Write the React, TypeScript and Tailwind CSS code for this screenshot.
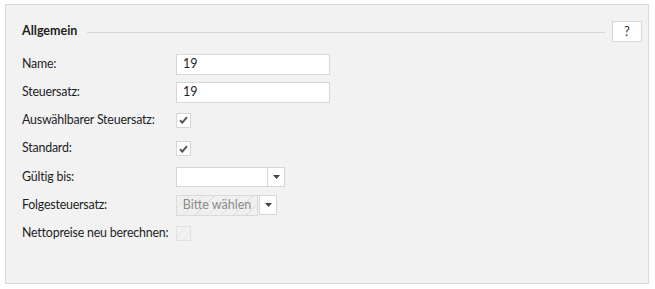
import React from 'react';

const font = { fontFamily: 'Lato, "Open Sans", Arial, sans-serif' };

const Caret = () => (
  <svg width="7" height="4" viewBox="0 0 7 4" className="block">
    <path d="M0 0h7L3.5 4z" fill="#444" />
  </svg>
);

const Check = ({ checked, disabled }: { checked?: boolean; disabled?: boolean }) => (
  <div
    className={`w-[15px] h-[15px] border flex items-center justify-center ${
      disabled
        ? 'border-[#e2e2e2] bg-[repeating-linear-gradient(135deg,#f2f2f2_0,#f2f2f2_6px,#e4e4e4_6px,#e4e4e4_7px)]'
        : 'border-[#d6d6d6] bg-white'
    }`}
  >
    {checked && (
      <svg width="9" height="8" viewBox="0 0 9 8">
        <path d="M1 4.3l2.3 2.3L8 1.2" stroke="#555" strokeWidth="2" fill="none" />
      </svg>
    )}
  </div>
);

const Row = ({ label, children }: { label: string; children: React.ReactNode }) => (
  <div className="flex items-center h-[28.2px]">
    <div className="w-[154px] text-[12.4px] tracking-[-0.2px] text-[#1e1e1e] leading-none whitespace-nowrap">
      {label}
    </div>
    {children}
  </div>
);

export default function App() {
  return (
    <div className="w-[655px] h-[289px] bg-white pt-[4px] pl-[5px]" style={font}>
      <div className="w-[644px] h-[280px] bg-[#f2f2f2] border border-[#d9d9d9] pl-[16px] pr-[6px] pt-[16px]">
        <div className="flex items-center h-[21px]">
          <span className="text-[12.5px] font-bold text-[#1e1e1e]">Allgemein</span>
          <div className="flex-1 h-px bg-[#d7d7d7] ml-[10px] mr-[7px] mt-[1px]" />
          <button className="w-[30px] h-[21px] bg-white border border-[#d7d7d7] text-[13px] text-[#333] leading-none">
            ?
          </button>
        </div>
        <div className="mt-[8px]">
          <Row label="Name:">
            <div className="w-[154px] h-[21px] bg-white border border-[#d6d6d6] text-[12.5px] text-[#1e1e1e] px-[6px] flex items-center">
              19
            </div>
          </Row>
          <Row label="Steuersatz:">
            <div className="w-[154px] h-[21px] bg-white border border-[#d6d6d6] text-[12.5px] text-[#1e1e1e] px-[6px] flex items-center">
              19
            </div>
          </Row>
          <Row label="Auswählbarer Steuersatz:">
            <Check checked />
          </Row>
          <Row label="Standard:">
            <Check checked />
          </Row>
          <Row label="Gültig bis:">
            <div className="flex">
              <div className="w-[92px] h-[20px] bg-white border border-[#d6d6d6]" />
              <div className="w-[18px] h-[20px] bg-white border border-[#d6d6d6] -ml-px flex items-center justify-center">
                <Caret />
              </div>
            </div>
          </Row>
          <Row label="Folgesteuersatz:">
            <div className="flex">
              <div className="w-[82px] h-[21px] border border-[#dadada] bg-[repeating-linear-gradient(135deg,#f0f0f0_0,#f0f0f0_8px,#e2e2e2_8px,#e2e2e2_9px)] text-[12.5px] text-[#8a8a8a] flex items-center justify-center">
                Bitte wählen
              </div>
              <div className="w-[18px] h-[20px] bg-white border border-[#d6d6d6] ml-[1px] flex items-center justify-center">
                <Caret />
              </div>
            </div>
          </Row>
          <Row label="Nettopreise neu berechnen:">
            <Check disabled />
          </Row>
        </div>
      </div>
    </div>
  );
}
